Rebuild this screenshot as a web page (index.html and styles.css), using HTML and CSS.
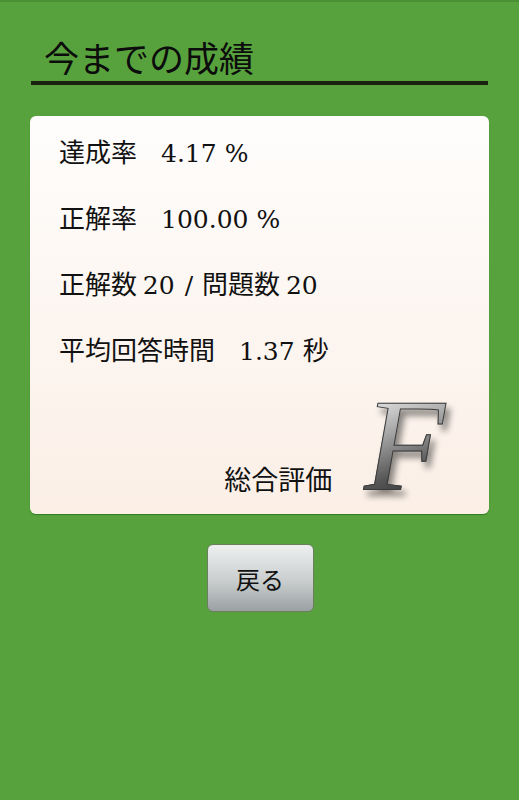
FILE: index.html
```html
<!DOCTYPE html>
<html lang="ja">
<head>
<meta charset="utf-8">
<link rel="stylesheet" href="styles.css">
</head>
<body>
<div class="screen">
  <h1 class="title">今までの成績</h1>
  <div class="card">
    <div class="row">達成率<span class="gap"></span><span class="num">4.17 %</span></div>
    <div class="row">正解率<span class="gap"></span><span class="num">100.00 %</span></div>
    <div class="row">正解数 <span class="num">20<span class="sl">/</span></span>問題数 <span class="num">20</span></div>
    <div class="row">平均回答時間<span class="gap"></span><span class="num">1.37 </span>秒</div>
    <div class="grade">
      <span class="grade-label">総合評価</span>
      <span class="grade-letter">F</span>
    </div>
  </div>
  <div class="actions">
    <button class="back">戻る</button>
  </div>
</div>
</body>
</html>
```
FILE: styles.css
```css
html, body {
  margin: 0;
  padding: 0;
}
body {
  width: 519px;
  height: 800px;
  background: #57a23d;
  font-family: "Noto Sans CJK JP", "Noto Sans", sans-serif;
  color: #111;
  overflow: hidden;
}
.screen {
  display: flex;
  flex-direction: column;
  height: 800px;
  border-top: 2px solid #4a8f34;
  box-sizing: border-box;
}
.title {
  margin: 31px 31px 0 31px;
  padding: 0 0 0 13px;
  font-size: 35px;
  font-weight: 400;
  line-height: 48px;
  border-bottom: 4px solid #18220f;
  color: #0c0c0c;
}
.card {
  margin: 31px 30px 0 30px;
  height: 398px;
  box-sizing: border-box;
  border-radius: 6px;
  background: linear-gradient(#fefdfc, #fbefe6);
  box-shadow: 0 1px 1px #2f7a1f;
  padding: 16px 0 0 29px;
  display: flex;
  flex-direction: column;
  gap: 28px;
}
.row {
  font-size: 26px;
  height: 38px;
  line-height: 38px;
  color: #111;
  white-space: nowrap;
}
.gap {
  display: inline-block;
  width: 24px;
}
.num {
  font-family: "DejaVu Serif", serif;
  font-size: 25px;
  line-height: 1;
}
.sl {
  margin: 0 9px 0 10px;
}
.grade {
  margin-top: auto;
  display: flex;
  justify-content: flex-end;
  align-items: flex-end;
  padding-right: 38px;
  padding-bottom: 25px;
}
.grade-label {
  font-size: 27px;
  line-height: 34px;
  margin-right: 26px;
}
.grade-letter {
  font-family: "Liberation Serif", serif;
  font-style: italic;
  font-size: 132px;
  line-height: 100px;
  background: linear-gradient(160deg, #f2f2f2 0%, #a8a8a8 35%, #555 70%, #2a2a2a 100%);
  -webkit-background-clip: text;
  background-clip: text;
  color: transparent;
  -webkit-text-stroke: 1px #3a3a3a;
  filter: drop-shadow(4px 6px 3px rgba(0,0,0,0.45));
  padding: 0 6px;
}
.actions {
  display: flex;
  justify-content: center;
  margin-top: 30px;
}
.back {
  width: 107px;
  height: 68px;
  border-radius: 6px;
  border: 1px solid #6b7f5f;
  background: linear-gradient(#eef0f0, #c9cdce 55%, #9aa1a2);
  font-family: "Noto Sans CJK JP", sans-serif;
  font-size: 24px;
  color: #111;
  padding: 0;
  margin-left: 1px;
}
```
